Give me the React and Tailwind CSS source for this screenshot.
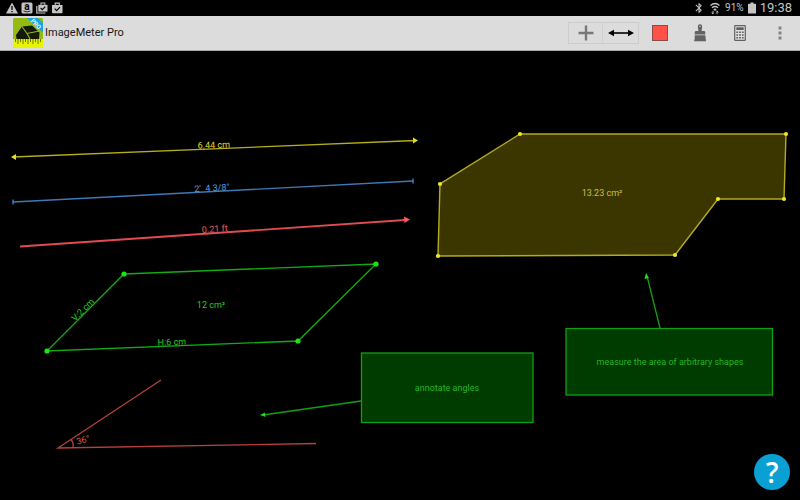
import React from "react";
import { MdBluetooth } from "react-icons/md";

// Status Bar
const StatusBar = () => {
  return (
    <div className="flex h-4 items-center justify-between bg-black pl-1.5 pr-2 text-[#c4c4c4]">
      <div className="flex items-center gap-[3px]">
        <svg className="h-3 w-3" viewBox="0 0 12 12" aria-label="Warning">
          <path d="M6 0.5 L12 11.5 H0 Z" fill="currentColor" />
          <path d="M6 4 V8 M6 9 V10.3" stroke="#000" strokeWidth="1.3" />
        </svg>
        <svg className="h-3 w-3" viewBox="0 0 12 12" aria-label="Amazon">
          <rect x="0.5" y="0.5" width="11" height="11" rx="1.5" fill="currentColor" />
          <text x="6" y="8" fontSize="10" fontWeight="700" textAnchor="middle" fill="#000">
            a
          </text>
          <path d="M2.5 9 Q6 10.9 9.5 9" stroke="#000" strokeWidth="0.8" fill="none" />
        </svg>
        <svg className="h-3 w-3" viewBox="0 0 12 12" aria-label="Updates">
          <path d="M0.8 4 V11 H9.5" stroke="currentColor" strokeWidth="1.2" fill="none" />
          <path d="M2.3 2.8 H11.5 V9.6 H2.3 Z" fill="currentColor" />
          <path d="M5 2.8 V1 H8.8 V2.8" stroke="currentColor" strokeWidth="1.1" fill="none" />
          <path d="M4.6 6 L6.3 7.7 L9.3 4.6" stroke="#000" strokeWidth="1.1" fill="none" />
        </svg>
        <svg className="h-3 w-3" viewBox="0 0 12 12" aria-label="Installed">
          <path d="M1 3 H11.5 V10.5 Q11.5 11.3 10.7 11.3 H1.8 Q1 11.3 1 10.5 Z" fill="currentColor" />
          <path d="M4.2 3 V1.1 H8.3 V3" stroke="currentColor" strokeWidth="1.1" fill="none" />
          <path d="M3.7 6.7 L5.6 8.6 L9 5.2" stroke="#000" strokeWidth="1.2" fill="none" />
        </svg>
      </div>

      <div className="flex items-center">
        <MdBluetooth className="mr-1 h-3 w-3" />
        <svg className="mr-1 h-3 w-3" viewBox="0 0 12 12" aria-label="Wi-Fi">
          <path d="M1.5 3.4 Q6 -0.4 10.5 3.4" stroke="currentColor" strokeWidth="1.3" fill="none" />
          <path d="M3 5.8 Q6 3.2 9 5.8" stroke="currentColor" strokeWidth="1.3" fill="none" />
          <path d="M4.3 7.2 Q6 6 7.7 7.2 L6 8.9 Z" fill="currentColor" />
          <path d="M4 8.8 V12 M2.8 10.4 L4 12 M8 12 V8.8 M9.2 10.4 L8 8.8" stroke="currentColor" fill="none" />
        </svg>
        <span className="mr-1 text-[10px] leading-4">91%</span>
        <svg className="mr-1 h-3 w-2" viewBox="0 0 8 12" aria-label="Battery">
          <path d="M2.5 0.5 H5.5 V1.7 H8 V11.5 H0 V1.7 H2.5 Z" fill="currentColor" />
        </svg>
        <span className="text-[13px] leading-4">19:38</span>
      </div>
    </div>
  );
};

// App Logo
const Logo = () => {
  return (
    <svg className="h-[30px] w-[30px]" viewBox="0 0 30 30" aria-hidden="true">
      <defs>
        <clipPath id="logo-clip">
          <rect width="30" height="30" rx="1.5" />
        </clipPath>
      </defs>
      <g clipPath="url(#logo-clip)">
        <rect width="30" height="30" fill="#95ba12" />
        <path d="M3 17 L9 8.5 L19 7.5 L26.5 14.5 L26 21 H3.5 Z" fill="#151a08" />
        <path d="M9 8.5 L14 15.5 L26.5 13 M14 15.5 L17 21" stroke="#95ba12" strokeWidth="1.1" fill="none" />
        <rect y="21" width="30" height="9" fill="#e6f400" />
        <path
          d="M2.5 21 v3 M5 21 v5 M7.5 21 v3 M10 21 v5 M12.5 21 v3 M15 21 v5 M17.5 21 v3 M20 21 v5 M22.5 21 v3 M25 21 v5 M27.5 21 v3"
          stroke="#6d7a00"
          strokeWidth="1"
        />
        <path d="M14 0 H25 L30 5 V14.5 Z" fill="#1ba4e0" />
        <text x="23" y="8" fontSize="6" fontWeight="700" fill="#e8f6ff" textAnchor="middle" transform="rotate(45 23 6)">
          PRO
        </text>
      </g>
    </svg>
  );
};

// Toolbar
const Toolbar = () => {
  const cell = "flex h-full w-10 items-center justify-center";

  return (
    <header className="flex h-[35px] items-center justify-between border-b border-[#a8a8a8] bg-[#dcdcdc] pl-[13px]">
      <div className="flex items-center gap-0.5">
        <Logo />
        <h1 className="text-[11px] leading-4 text-[#161616]">ImageMeter Pro</h1>
      </div>

      <div className="flex h-full items-center">
        <div className="mr-px flex h-[22px] border border-[#cccccc] divide-x divide-[#d0d0d0]">
          <button aria-label="Add" className="flex w-[34px] items-center justify-center">
            <svg className="h-4 w-4" viewBox="0 0 16 16">
              <path d="M8 0.5 V15.5 M0.5 8 H15.5" stroke="#777" strokeWidth="2.4" />
            </svg>
          </button>
          <button aria-label="Line style" className="flex w-[35px] items-center justify-center">
            <svg className="h-2 w-[26px]" viewBox="0 0 26 8">
              <path d="M4 4 H22" stroke="#000" strokeWidth="1.6" />
              <path d="M0 4 L6 0.8 V7.2 Z M26 4 L20 0.8 V7.2 Z" fill="#000" />
            </svg>
          </button>
        </div>
        <button aria-label="Colour" className={cell}>
          <span className="h-4 w-4 border border-[#8c4a48] bg-[#ff5148]" />
        </button>
        <button aria-label="Brush" className={cell}>
          <svg className="h-[18px] w-3" viewBox="0 0 12 18">
            <path
              d="M6 0.3 Q8.2 0.3 8.2 2.6 L7.6 7 H10 Q11.3 7 11.3 8.4 V10.6 H0.7 V8.4 Q0.7 7 2 7 H4.4 L3.8 2.6 Q3.8 0.3 6 0.3 Z"
              fill="#626262"
            />
            <path d="M0.7 11.2 H11.3 L12 17.3 H0 Q1 15 0.7 11.2 Z" fill="#626262" />
            <circle cx="6" cy="2.4" r="0.7" fill="#dcdcdc" />
          </svg>
        </button>
        <button aria-label="Calculator" className={cell}>
          <svg className="h-4 w-3" viewBox="0 0 12 16">
            <rect x="0.7" y="0.7" width="10.6" height="14.6" rx="0.6" fill="#e2e2e2" stroke="#606060" strokeWidth="1.2" />
            <rect x="2.3" y="2.3" width="7.4" height="2.7" fill="#606060" />
            <path d="M2.3 7.2 H9.7 M2.3 10 H9.7 M2.3 12.8 H9.7" stroke="#606060" strokeWidth="1.6" strokeDasharray="1.8 1" />
          </svg>
        </button>
        <button aria-label="More options" className={cell}>
          <svg className="h-[14px] w-1" viewBox="0 0 4 14">
            <path d="M0.5 0.5 h3 v3 h-3 Z M0.5 5.5 h3 v3 h-3 Z M0.5 10.5 h3 v3 h-3 Z" fill="#848484" />
          </svg>
        </button>
      </div>
    </header>
  );
};

// Corner points of a shape
const Dots = ({ points, r, fill }) => {
  return points.map(([x, y]) => <circle key={`${x}-${y}`} cx={x} cy={y} r={r} fill={fill} />);
};

const areaPoints = [
  [520, 134],
  [786, 134],
  [784, 199],
  [718, 199],
  [675, 255],
  [438, 256],
  [440, 184],
];

const planePoints = [
  [124, 274],
  [376, 264],
  [298, 341],
  [47, 351],
];

// Annotated canvas
const Canvas = () => {
  return (
    <svg className="block h-auto w-full" viewBox="0 51 800 449" fontSize="9" textAnchor="middle">
      {/* Lengths */}
      <g fill="#e0d830" stroke="none">
        <path d="M13 157 L416 140.500" stroke="#b5ad1c" strokeWidth="1.3" />
        <path d="M11 157 L16 154 V160 Z M418 140.500 L413 137.500 V143.500 Z" fill="#e6de1c" />
        <text x="214" y="148" transform="rotate(-2 214 148)">
          6.44 cm
        </text>
      </g>
      <g fill="#5a9ce0">
        <path d="M13 202 L413 181" stroke="#3f78b8" strokeWidth="1.3" />
        <path d="M13 199.500 V204.500 M413 178.500 V183.500" stroke="#4f8fd0" strokeWidth="1.2" />
        <text x="212" y="191" transform="rotate(-3 212 191)" xmlSpace="preserve">
          {"2'  4 3/8\""}
        </text>
      </g>
      <g fill="#ee5c60">
        <path d="M20 246.500 L405 220" stroke="#e04c50" strokeWidth="1.8" />
        <path d="M410 219.500 L404 216.500 L404.500 223 Z" fill="#ff5a5a" />
        <text x="215" y="232" transform="rotate(-4 215 232)">
          0.21 ft
        </text>
      </g>

      {/* Area */}
      <polygon points={areaPoints.join(" ")} fill="#3b3600" stroke="#b4ab20" strokeWidth="1.4" />
      <Dots points={areaPoints} r="2.1" fill="#f0e626" />
      <text x="602" y="196" fill="#c8c048">
        13.23 cm²
      </text>

      {/* Reference plane */}
      <polygon points={planePoints.join(" ")} fill="none" stroke="#12ac12" strokeWidth="1.3" />
      <Dots points={planePoints} r="2.6" fill="#17e617" />
      <g fill="#26cc26">
        <text x="211" y="308">12 cm²</text>
        <text x="172" y="345" transform="rotate(-2 172 345)">
          H:6 cm
        </text>
        <text x="85" y="312" transform="rotate(-45 85 312)">
          V:2 cm
        </text>
      </g>

      {/* Angle */}
      <g fill="none" stroke="#b8403c" strokeWidth="1.3">
        <path d="M161 380 L58 448 L316 443.500" />
        <path d="M71 439.500 Q74 443 73 447.500" />
      </g>
      <text x="84" y="443" fill="#d25854" transform="rotate(-16 84 443)">
        36°
      </text>

      {/* Notes */}
      <g stroke="#11a011" strokeWidth="1.3">
        <path d="M361 401 L263 415 M660 328 L647 276" />
        <rect x="361.500" y="353" width="171.500" height="69.500" fill="#003b00" />
        <rect x="566" y="328.500" width="206.500" height="66.500" fill="#003b00" />
      </g>
      <path d="M260 415 L265 412.500 L265.500 417 Z M646 273 L644.500 279 L649 278 Z" fill="#1bdc1b" />
      <g fill="#28b428">
        <text x="447" y="391">annotate angles</text>
        <text x="670" y="365">measure the area of arbitrary shapes</text>
      </g>
    </svg>
  );
};

const App = () => {
  return (
    <div className="relative min-h-screen bg-black font-['Roboto',sans-serif]">
      <StatusBar />
      <Toolbar />
      <Canvas />

      <button
        aria-label="Help"
        className="absolute bottom-2.5 right-2.5 flex h-9 w-9 items-center justify-center rounded-full bg-[#0aa0d3] font-['Open_Sans',sans-serif] text-[28px] leading-9 font-semibold text-white"
      >
        ?
      </button>
    </div>
  );
};

export default App;
